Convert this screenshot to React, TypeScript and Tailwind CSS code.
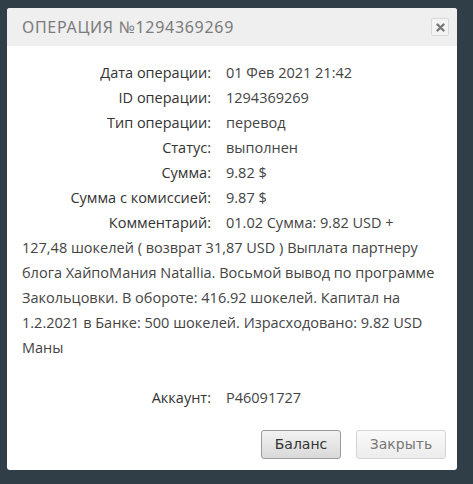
import React from "react";

const rows: [string, string][] = [
  ["Дата операции:", "01 Фев 2021 21:42"],
  ["ID операции:", "1294369269"],
  ["Тип операции:", "перевод"],
  ["Статус:", "выполнен"],
  ["Сумма:", "9.82 $"],
  ["Сумма с комиссией:", "9.87 $"],
];

function Label({ children }: { children: React.ReactNode }) {
  return (
    <span className="inline-block w-[204px] pr-[15px] text-right font-medium text-[#333]">
      {children}
    </span>
  );
}

export default function App() {
  return (
    <div className="w-[473px] h-[484px] bg-[#2f3e47] pt-[8px] pl-[7px]">
      <div className="w-[450px] h-[462px] bg-white rounded-[3px] overflow-hidden flex flex-col">
        <div className="h-[38px] bg-[#efefef] flex items-center justify-between pl-[15px] pr-[8px]">
          <span
            className="text-[16px] tracking-[0.7px] text-[#7b7b7b]"
            style={{ fontFamily: '"Noto Sans", sans-serif' }}
          >
            ОПЕРАЦИЯ №1294369269
          </span>
          <button className="w-[18px] h-[18px] border border-[#d8d8d8] rounded-[2px] bg-[#f4f4f4] flex items-center justify-center">
            <svg width="9" height="9" viewBox="0 0 9 9">
              <path d="M1.5 1.5 L7.5 7.5 M7.5 1.5 L1.5 7.5" stroke="#777" strokeWidth="2.4" strokeLinecap="round" />
            </svg>
          </button>
        </div>
        <div
          className="pt-[14px] pl-[15px] pr-[4px] text-[14.5px] leading-[25px] text-[#444]"
          style={{ fontFamily: '"Open Sans", sans-serif' }}
        >
          {rows.map(([l, v]) => (
            <div key={l}>
              <Label>{l}</Label>
              <span>{v}</span>
            </div>
          ))}
          <div>
            <Label>Комментарий:</Label>
            <span>
              01.02 Сумма: 9.82 USD +<br />
              127,48 шокелей ( возврат 31,87 USD ) Выплата партнеру<br />
              блога ХайпоМания Natallia. Восьмой вывод по программе<br />
              Закольцовки. В обороте: 416.92 шокелей. Капитал на<br />
              1.2.2021 в Банке: 500 шокелей. Израсходовано: 9.82 USD<br />
              Маны
            </span>
          </div>
          <div className="mt-[25px]">
            <Label>Аккаунт:</Label>
            <span>P46091727</span>
          </div>
        </div>
        <div
          className="flex justify-end gap-[15px] pr-[11px] mt-[20px]"
          style={{ fontFamily: '"DejaVu Sans", Verdana, sans-serif' }}
        >
          <button className="w-[80px] h-[29px] rounded-[3px] border border-[#9a9a9a] bg-gradient-to-b from-[#f2f2f2] to-[#d9d9d9] text-[14px] text-[#333]">
            Баланс
          </button>
          <button className="w-[90px] h-[29px] rounded-[3px] border border-[#d4d4d4] bg-gradient-to-b from-[#fafafa] to-[#ececec] text-[14px] text-[#777]">
            Закрыть
          </button>
        </div>
      </div>
    </div>
  );
}
